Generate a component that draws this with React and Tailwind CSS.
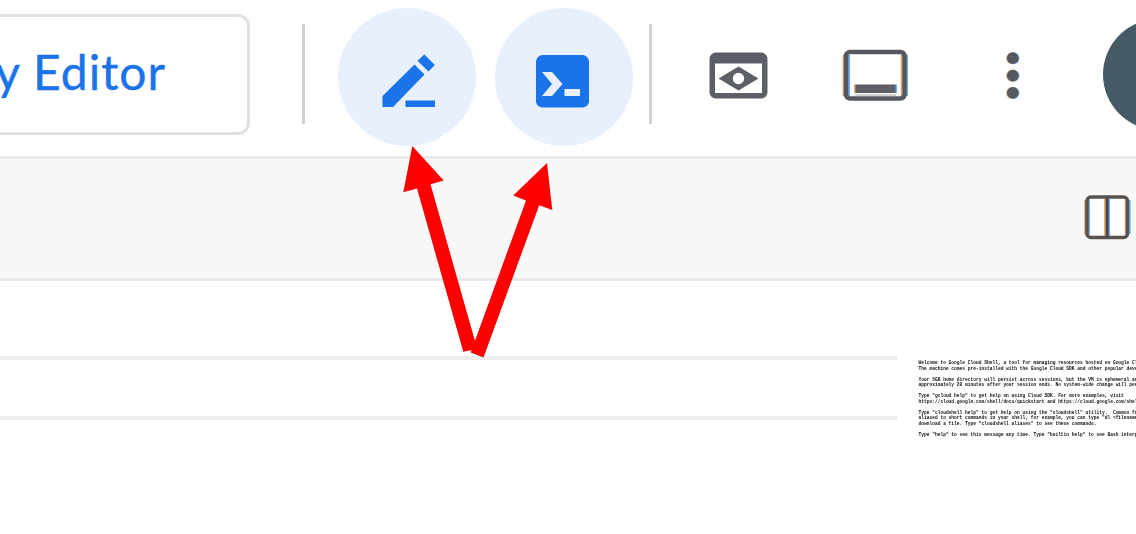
const terminalLines = [
  'Welcome to Google Cloud Shell, a tool for managing resources hosted on Google Cloud Platform!',
  'The machine comes pre-installed with the Google Cloud SDK and other popular developer tools.',
  '',
  'Your 5GB home directory will persist across sessions, but the VM is ephemeral and will be reset',
  'approximately 20 minutes after your session ends. No system-wide change will persist beyond that.',
  '',
  'Type "gcloud help" to get help on using Cloud SDK. For more examples, visit',
  'https://cloud.google.com/shell/docs/quickstart and https://cloud.google.com/shell/docs/examples',
  '',
  'Type "cloudshell help" to get help on using the "cloudshell" utility.  Common functionality is',
  'aliased to short commands in your shell, for example, you can type "dl <filename>" at Bash prompt to',
  'download a file. Type "cloudshell aliases" to see these commands.',
  '',
  'Type "help" to see this message any time. Type "builtin help" to see Bash interpreter help.',
];

function Divider({ className }) {
  return <div className={`mt-6 h-[100px] w-[3px] shrink-0 bg-[#d2d2d2] ${className}`} />;
}

function EditIcon() {
  return (
    <svg className="mt-[46px] ml-11 h-[53px] w-[53px]" viewBox="0 0 53 53" fill="#1a73e8" aria-hidden="true">
      <path d="M0.500 42 32.500 10.500 42.500 20.500 11 53H0.500Z" />
      <path d="m35.500 6.800 6.800-6.300 10.500 10.500-6.300 6.500Z" />
      <path d="M23.500 46.500H53V53H23.500Z" />
    </svg>
  );
}

function TerminalIcon() {
  return (
    <svg className="mt-[47px] ml-[41px] h-[53px] w-[53px]" viewBox="0 0 53 53" aria-hidden="true">
      <path d="M6 0h41q5 1 6 6v41q-1 4.500-6 5.500H6q-5-1-6-5.500V6q1-5 6-6Z" fill="#1a73e8" />
      <path d="M6 17h10l10.500 12L16 41H6l10-12ZM28.500 34H44v7H28.500Z" fill="#e8f0fe" />
    </svg>
  );
}

function PreviewIcon() {
  return (
    <svg className="mt-[52px] ml-[57px] h-[47px] w-[59px] shrink-0" viewBox="0 0 59 47" fill="#5c6066" aria-hidden="true">
      <path
        fillRule="evenodd"
        d="M6 0.500h47q4.500 1 5.500 5.500v35q-1 4.500-5.500 5.500H6q-4.500-1-5.500-5.500V6q1-4.500 5.500-5.500Zm0 11v29.500h47V11.500Z"
      />
      <path fillRule="evenodd" d="M9.500 26.500 29.500 14.500l20 12-20 12ZM29.500 20.800a5.700 5.700 0 1 0 0 11.400 5.700 5.700 0 0 0 0-11.400Z" />
    </svg>
  );
}

function SessionPanelIcon() {
  return (
    <svg className="mt-[49px] ml-[74px] h-[53px] w-[67px] shrink-0" viewBox="0 0 67 53" aria-hidden="true">
      <path d="M1.700 6v41M59.700 6v41M13 35.500V44" stroke="#e0a36d" strokeWidth="2" />
      <path d="M7 6v41M65 6v41M54 35.500V44" stroke="#6aaef0" strokeWidth="2" />
      <rect x="4" y="3" width="58.500" height="46.500" rx="4" fill="none" stroke="#55595f" strokeWidth="4.500" />
      <path d="M13.500 35.500h40V44h-40Z" fill="#5c6066" />
      <path d="M13 45h41v2H13Z" fill="#d0d0d0" />
    </svg>
  );
}

function MoreIcon() {
  return (
    <svg className="mt-[51px] ml-[96px] h-[50px] w-4 shrink-0" viewBox="0 0 16 50" aria-hidden="true">
      <g fill="#e9b584">
        <circle cx="7.100" cy="7.200" r="6" />
        <circle cx="7.100" cy="24.700" r="6" />
        <circle cx="7.100" cy="41.900" r="6" />
      </g>
      <g fill="#84bdf0">
        <circle cx="8.500" cy="7.200" r="6" />
        <circle cx="8.500" cy="24.700" r="6" />
        <circle cx="8.500" cy="41.900" r="6" />
      </g>
      <g fill="#56595f">
        <circle cx="7.800" cy="7.200" r="5.900" />
        <circle cx="7.800" cy="24.700" r="5.900" />
        <circle cx="7.800" cy="41.900" r="5.900" />
      </g>
    </svg>
  );
}

function SplitIcon() {
  return (
    <svg className="h-[47px] w-[47px]" viewBox="0 0 47 47" aria-hidden="true">
      <rect x="3" y="3" width="41" height="40.500" rx="4" fill="#fdfdfd" />
      <path d="M1.300 6v34M41.800 6v34M21.200 5v37" stroke="#dda064" strokeWidth="2" />
      <path d="M5 6v34M45.700 6v34M25 5v37" stroke="#70b6f0" strokeWidth="2" />
      <rect x="3" y="3" width="40.500" height="40.500" rx="4" fill="none" stroke="#58534f" strokeWidth="3.500" />
      <path d="M23.200 4v39" stroke="#48484c" strokeWidth="3" />
    </svg>
  );
}

function Arrows() {
  return (
    <svg className="pointer-events-none absolute top-0 left-0 h-[534px] w-[1136px]" viewBox="0 0 1136 534" fill="#ff0000" aria-hidden="true">
      <path d="M412.300 146 443.700 180.500 430.500 184.200 475 341V349.500L463.300 351.700 417 188.500 403.300 192.200Z" />
      <path d="M547 163 552.300 210 539.200 205.200 483.500 357.500 470.700 352.500 526 200.500 513.200 195.500Z" />
    </svg>
  );
}

export default function App() {
  return (
    <div className="relative flex h-[534px] w-[1136px] flex-col overflow-hidden bg-white">
      <header className="flex h-[159px] shrink-0 items-start overflow-hidden border-b-[3px] border-[#e9eaee]">
        <button className="mt-3.5 flex h-[121px] w-[250px] shrink-0 items-center justify-end rounded-r-xl border-y-[3px] border-r-[3px] border-[#dfe1e5] pr-[81px] pb-[5px] font-['Lato',sans-serif] text-[48px] leading-none tracking-[1px] whitespace-pre text-[#1a73e8] [-webkit-text-stroke:0.4px_#1a73e8]">
          y Editor
        </button>
        <Divider className="ml-[52px]" />
        <button className="mt-2 ml-[33px] flex size-[138px] shrink-0 items-start rounded-full bg-[#e8f0fe]" aria-label="Edit">
          <EditIcon />
        </button>
        <button className="mt-2 ml-[19px] flex size-[138px] shrink-0 items-start rounded-full bg-[#e8f0fe]" aria-label="Terminal">
          <TerminalIcon />
        </button>
        <Divider className="ml-4" />
        <PreviewIcon />
        <SessionPanelIcon />
        <MoreIcon />
        <div className="mt-[19px] ml-[82px] size-[111px] shrink-0 rounded-full bg-[#455a64]" />
      </header>
      <div className="flex h-[122px] shrink-0 items-start justify-end border-b-[3px] border-[#e8e8e8] bg-[#f8f8f8] pt-[35px] pr-[5px]">
        <SplitIcon />
      </div>
      <main className="flex flex-1 items-start overflow-hidden">
        <div className="mt-[75px] h-[64px] w-[897px] shrink-0 border-y-4 border-[#ededed]" />
        <div className="mt-[79px] ml-[21.500px] shrink-0 font-['Liberation_Mono',monospace] text-[4.570px] leading-[5.540px] font-bold whitespace-pre text-[#111] blur-[0.5px]">
          {terminalLines.map((line, i) => (
            <div key={i} className="h-[5.540px]">{line}</div>
          ))}
        </div>
      </main>
      <Arrows />
    </div>
  );
}
